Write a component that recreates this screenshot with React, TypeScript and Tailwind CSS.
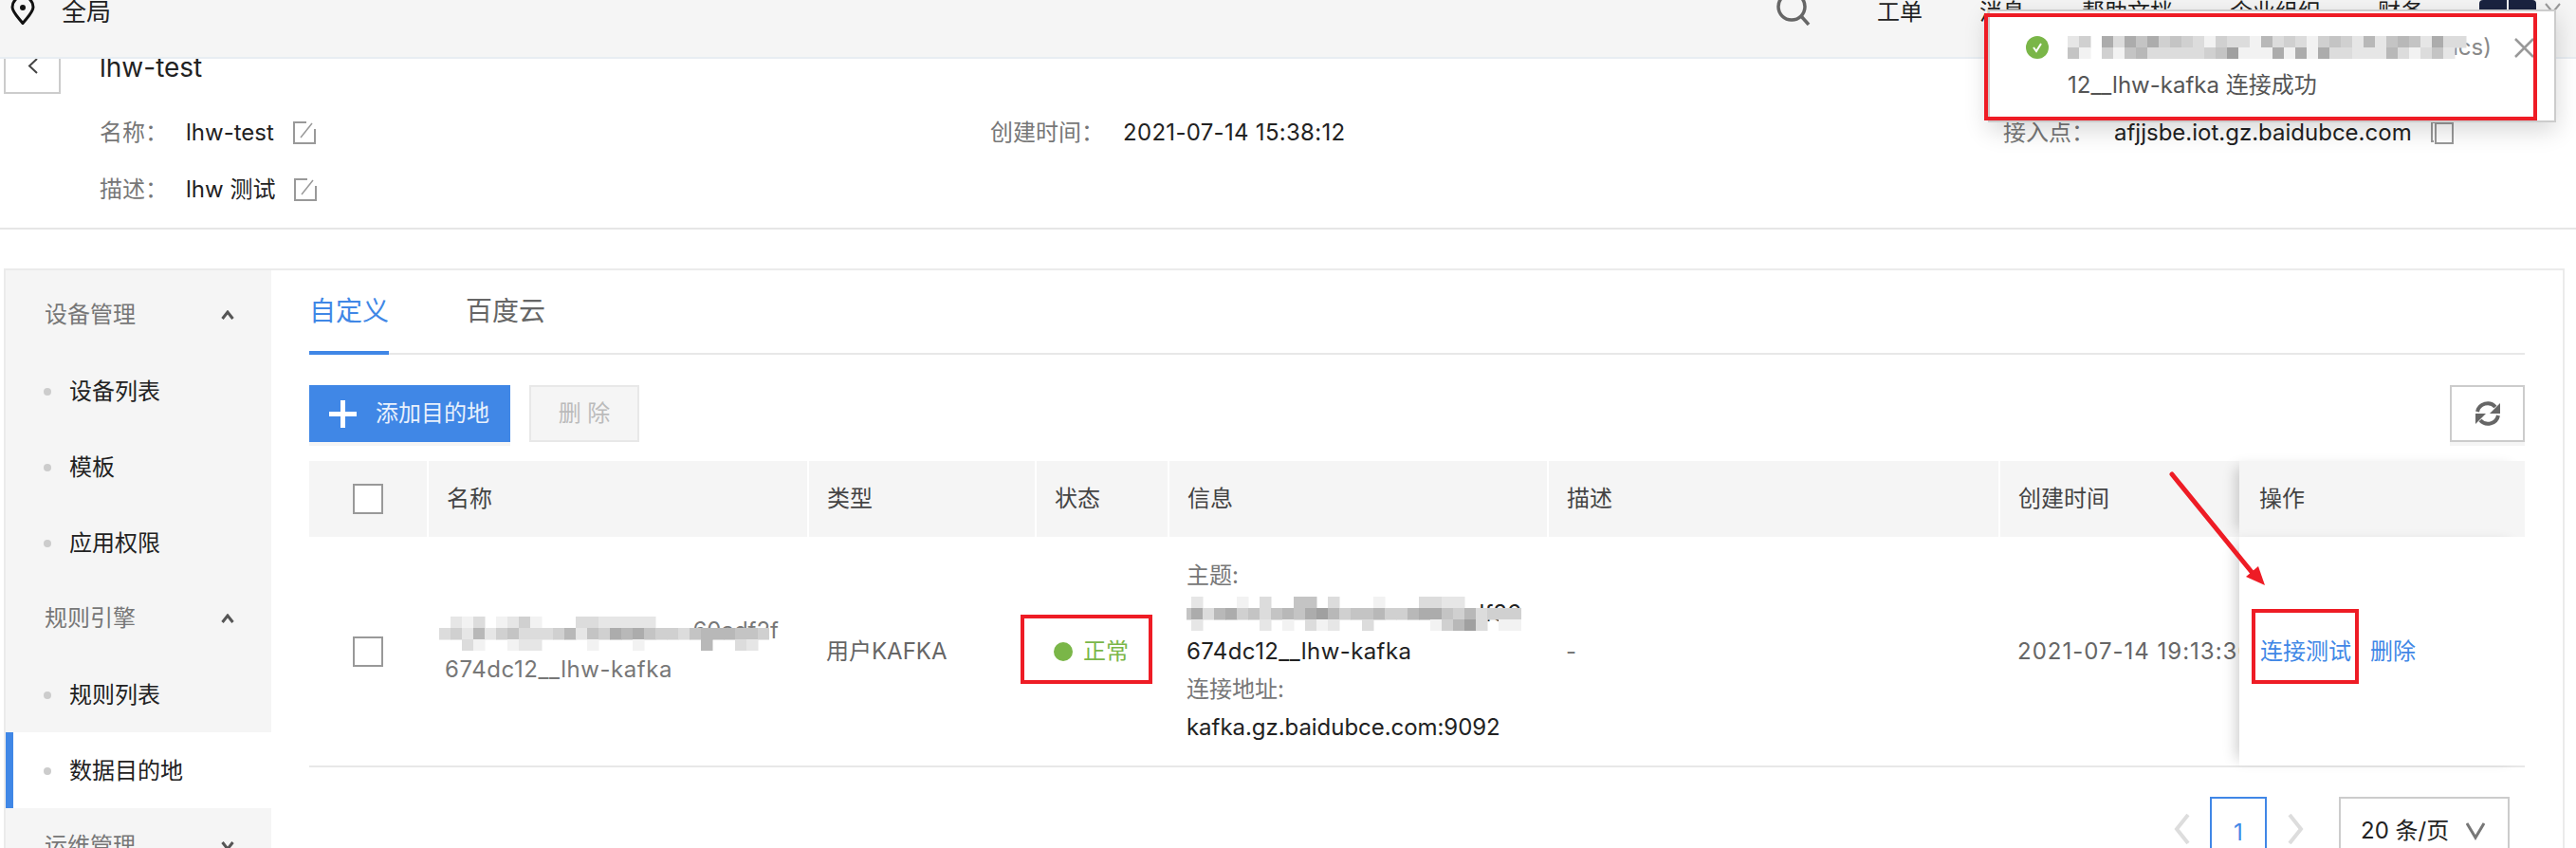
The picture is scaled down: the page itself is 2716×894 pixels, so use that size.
import React from "react";

const FONT = "font-['Inter','Noto_Sans_CJK_SC',sans-serif]";

const GREYS = ["transparent", "#f2f2f2", "#e6e6e6", "#dcdcdc", "#d0d0d0", "#c4c4c4", "#b8b8b8", "#acacac", "#a0a0a0", "#949494"];

// each row of digits is one line of the blurred-out pixels, 0 = nothing there
function Mosaic({ rows, className }: { rows: string[]; className: string }) {
  const cols = Math.max(...rows.map((r) => r.length));
  return (
    <svg className={className} width={cols * 12} height={rows.length * 12} viewBox={`0 0 ${cols * 12} ${rows.length * 12}`}>
      {rows.map((row, y) =>
        row.split("").map((c, x) =>
          c === "0" ? null : <rect key={`${x}-${y}`} x={x * 12} y={y * 12} width="12.5" height="12.5" fill={GREYS[Number(c)]} />
        )
      )}
    </svg>
  );
}

function EditIcon() {
  return (
    <svg width="24" height="24" viewBox="0 0 24 24" fill="none" stroke="#999" strokeWidth="2" className="ml-[20px] shrink-0">
      <path d="M14 1H1v22h22V8" />
      <path d="M8 17L20 2" strokeWidth="1.5" />
    </svg>
  );
}

function Check() {
  return <div className="flex h-[32px] w-[32px] border-2 border-[#999] bg-white" />;
}

function Dot() {
  return <span className="h-[8px] w-[8px] shrink-0 rounded-full bg-[#ccc]" />;
}

function Caret({ down }: { down?: boolean }) {
  return (
    <svg width="14" height="10" viewBox="0 0 14 10" fill="none" stroke="#555" strokeWidth="3" className={down ? "rotate-180" : ""}>
      <path d="M1.500 9L7 2l5.500 7" />
    </svg>
  );
}

function Group({ label, down }: { label: string; down?: boolean }) {
  return (
    <div className="flex h-[80px] items-center justify-between pl-[41px] pr-[39px] text-[24px] text-[#777]">
      <span>{label}</span>
      <Caret down={down} />
    </div>
  );
}

function Item({ label, active }: { label: string; active?: boolean }) {
  return (
    <div className={`flex h-[80px] items-center gap-[19px] pt-[2px] text-[24px] text-[#222] ${active ? "border-l-[8px] border-[#4087e6] bg-white pl-[32px]" : "pl-[40px]"}`}>
      <Dot />
      <span>{label}</span>
    </div>
  );
}

function Meta({ label, children }: { label: string; children: React.ReactNode }) {
  return (
    <div className="flex h-[60px] items-center text-[24px]">
      <span className="text-[#777]">{label}</span>
      {children}
    </div>
  );
}

const headCell = "flex h-[80px] items-center border-l-2 border-white bg-[#f5f5f5] pl-[19px] text-[24px] text-[#444]";
const bodyCell = "flex h-[241px] items-center pl-[20px] text-[24px]";
const stickyShadow = "relative shadow-[-10px_0_14px_-7px_rgba(0,0,0,0.2)]";

export default function App() {
  return (
    <div className={`relative h-[894px] w-[2716px] overflow-hidden bg-white ${FONT}`}>
      {/* top bar */}
      <div className="relative z-10 flex h-[62px] items-start border-b-2 border-[#e8edf2] bg-[#f5f5f5] pl-[11px] pr-[16px] text-[24px] text-[#222]">
        <svg width="26" height="27" viewBox="0 0 26 27" fill="none" stroke="#111" strokeWidth="3" className="-mt-[1px]">
          <path d="M13 25.500C7 18 2 13.500 2 8.500a11 11 0 0 1 22 0C24 13.500 19 18 13 25.500z" />
          <circle cx="13" cy="9" r="3" fill="#111" stroke="none" />
        </svg>
        <span className="ml-[28px] text-[26px] leading-[26px]">全局</span>
        <div className="ml-auto flex h-[26px] items-center">
          <svg width="36" height="28" viewBox="0 0 36 28" fill="none" stroke="#666" strokeWidth="3.500">
            <circle cx="16" cy="8" r="14" />
            <path d="M26 18l8 9" />
          </svg>
          <span className="ml-[70px]">工单</span>
          <span className="ml-[60px]">消息</span>
          <span className="ml-[60px]">帮助文档</span>
          <span className="ml-[60px]">企业组织</span>
          <span className="ml-[60px]">财务</span>
          <div className="ml-[59px] flex h-[26px] w-[60px] justify-center rounded-t-[4px] bg-[#1a2340]">
            <span className="h-full w-[2px] bg-[#f5f5f5]" />
          </div>
          <svg width="17" height="12" viewBox="0 0 17 12" fill="none" stroke="#999" strokeWidth="2" className="-mt-[8px] ml-[9px]">
            <path d="M1 1l7.500 9L16 1" />
          </svg>
        </div>
      </div>

      {/* instance info */}
      <div className="flex h-[180px] border-b-2 border-[#e6e6e6] pl-[4px]">
        <div className="-mt-[22px] flex h-[59px] w-[60px] items-center justify-center border-2 border-[#ccc] bg-white">
          <svg width="13" height="17" viewBox="0 0 13 17" fill="none" stroke="#444" strokeWidth="2">
            <path d="M11 1L3 8.500l8 7.500" />
          </svg>
        </div>
        <div className="ml-[41px] flex-1">
          <div className="text-[28px] leading-[18px] text-[#222]">lhw-test</div>
          <div className="mt-[30px] grid grid-cols-[939px_1068px_1fr]">
            <Meta label="名称：">
              <span className="ml-[19px] text-[#222]">lhw-test</span>
              <EditIcon />
            </Meta>
            <Meta label="创建时间：">
              <span className="ml-[20px] tracking-[0.3px] text-[#222]">2021-07-14 15:38:12</span>
            </Meta>
            <Meta label="接入点：">
              <span className="ml-[21px] text-[#222]">afjjsbe.iot.gz.baidubce.com</span>
              <svg width="24" height="24" viewBox="0 0 24 24" fill="none" stroke="#999" strokeWidth="2" className="ml-[20px]">
                <path d="M5 1H1v20h2" />
                <rect x="5" y="2" width="18" height="21" />
              </svg>
            </Meta>
            <Meta label="描述：">
              <span className="ml-[19px] text-[#222]">lhw 测试</span>
              <EditIcon />
            </Meta>
          </div>
        </div>
      </div>

      {/* main panel */}
      <div className="ml-[4px] mt-[41px] flex w-[2700px] border-2 border-[#ebebeb]">
        <div className="h-[620px] w-[280px] shrink-0 bg-[#f5f5f5] pt-[7px]">
          <Group label="设备管理" />
          <Item label="设备列表" />
          <Item label="模板" />
          <Item label="应用权限" />
          <Group label="规则引擎" />
          <Item label="规则列表" />
          <Item label="数据目的地" active />
          <Group label="运维管理" down />
        </div>

        <div className="min-w-0 flex-1 px-[40px]">
          <div className="flex h-[89px] gap-[81px] border-b-2 border-[#e8e8e8] text-[28px] leading-[34px]">
            <div className="h-[89px] border-b-4 border-[#4087e6] pt-[26px] text-[#4087e6]">自定义</div>
            <div className="pt-[26px] text-[#666]">百度云</div>
          </div>

          <div className="mt-[32px] flex h-[60px] items-stretch text-[24px]">
            <button className="flex w-[212px] items-center bg-[#4087e6] pl-[21px] text-[#e8f0fc] shadow-[0_4px_0_#f5f5f5]">
              <svg width="29" height="29" viewBox="0 0 29 29" fill="#fff">
                <path d="M12 0h5v12h12v5H17v12h-5V17H0v-5h12z" />
              </svg>
              <span className="ml-[20px]">添加目的地</span>
            </button>
            <button className="ml-[20px] w-[116px] border-2 border-[#e8e8e8] bg-[#f5f5f5] text-[#bbb]">删 除</button>
            <button className="ml-auto flex w-[79px] items-center justify-center border-2 border-[#ccc] shadow-[0_4px_0_#f5f5f5]">
              <svg width="30" height="28" viewBox="0 0 30 28" fill="none" stroke="#666" strokeWidth="4">
                <path d="M4 12A11 11 0 0 1 23 7" />
                <path d="M26 16A11 11 0 0 1 7 21" />
                <path d="M28 3v11H17z" fill="#666" stroke="none" />
                <path d="M2 25V14h11z" fill="#666" stroke="none" />
              </svg>
            </button>
          </div>

          {/* table */}
          <div className="mt-[20px] grid grid-cols-[124px_401px_240px_140px_400px_476px_254px_301px] border-b-2 border-[#e8e8e8]">
            <div className="flex h-[80px] items-center justify-center bg-[#f5f5f5]"><Check /></div>
            <div className={headCell}>名称</div>
            <div className={headCell}>类型</div>
            <div className={headCell}>状态</div>
            <div className={headCell}>信息</div>
            <div className={headCell}>描述</div>
            <div className={headCell}>创建时间</div>
            <div className={`${headCell} ${stickyShadow} border-none pl-[21px]`}>操作</div>

            <div className="flex h-[241px] items-center justify-center"><Check /></div>
            <div className="h-[241px] pl-[19px] pt-[84px] text-[24px] text-[#777]">
              <div className="relative h-[30px] w-[352px] overflow-visible text-right leading-[30px]">
                60adf2f
                <Mosaic
                  className="absolute -left-[6px] top-0"
                  rows={[
                    "02130124100033222220000000000",
                    "34262453334625476754435666554",
                    "00310012200001000100000600320",
                  ]}
                />
              </div>
              <div className="mt-[9px] leading-[34px] tracking-[0.55px]">674dc12__lhw-kafka</div>
            </div>
            <div className={`${bodyCell} text-[#666]`}>用户KAFKA</div>
            <div className={`${bodyCell} gap-[11px] text-[#7ab648]`}>
              <span className="h-[20px] w-[20px] rounded-full bg-[#7ab648]" />
              正常
            </div>
            <div className="flex h-[241px] flex-col justify-center whitespace-nowrap pl-[20px] text-[24px] leading-[40px] text-[#222]">
              <span className="text-[#777]">主题:</span>
              <div className="relative h-[40px] overflow-hidden text-right">
                <span className="mr-[27px] text-[#222]">lf86</span>
                <Mosaic
                  className="absolute -left-[7px] top-[2px]"
                  rows={[
                    "020001030055030001000332200000",
                    "573674535657864556446775463444",
                    "020000020103120030000014683011",
                  ]}
                />
              </div>
              <span className="tracking-[0.4px]">674dc12__lhw-kafka</span>
              <span className="text-[#777]">连接地址:</span>
              <span className="-tracking-[0.05px]">kafka.gz.baidubce.com:9092</span>
            </div>
            <div className={`${bodyCell} text-[#777]`}>-</div>
            <div className={`${bodyCell} overflow-hidden whitespace-nowrap tracking-[1px] text-[#666]`}>2021-07-14 19:13:30</div>
            <div className={`${bodyCell} ${stickyShadow} gap-[20px] bg-white pl-[22px] text-[#4087e6]`}>
              <span>连接测试</span>
              <span>删除</span>
            </div>
          </div>

          {/* pagination */}
          <div className="mt-[31px] flex items-start justify-end pr-[16px] text-[24px]">
            <svg width="17" height="32" viewBox="0 0 17 32" fill="none" stroke="#ddd" strokeWidth="4" className="mt-[18px]">
              <path d="M15 1L3 16l12 15" />
            </svg>
            <div className="ml-[21px] flex h-[80px] w-[60px] justify-center border-2 border-[#4087e6] pt-[18px] text-[#4087e6]">1</div>
            <svg width="17" height="32" viewBox="0 0 17 32" fill="none" stroke="#ddd" strokeWidth="4" className="ml-[22px] mt-[18px]">
              <path d="M2 1l12 15L2 31" />
            </svg>
            <div className="ml-[37px] flex h-[80px] w-[180px] items-start border-2 border-[#ccc] pl-[21px] pt-[16px] text-[24px] text-[#222]">
              <span>20 条/页</span>
              <svg width="20" height="20" viewBox="0 0 20 20" fill="none" stroke="#777" strokeWidth="3" className="ml-auto mr-[24px] mt-[8px]">
                <path d="M1 2l9 15 9-15" />
              </svg>
            </div>
          </div>
        </div>
      </div>

      {/* toast */}
      <div className="absolute left-[2096px] top-[10px] z-20 h-[119px] w-[599px] border-2 border-[#ccc] bg-white pl-[38px] pr-[21px] pt-[18px] text-[24px] text-[#555] shadow-[0_8px_24px_rgba(0,0,0,0.16)]">
        <div className="flex h-[40px] items-center">
          <svg width="24" height="24" viewBox="0 0 24 24" className="shrink-0">
            <circle cx="12" cy="12" r="12" fill="#7ab648" />
            <path d="M8 12l3 4 5-8" fill="none" stroke="#fff" strokeWidth="2" />
          </svg>
          <div className="relative ml-[20px] w-[447px] text-right text-[#888]">
            74dcs)
            <Mosaic
              className="absolute left-0 top-[6px]"
              rows={["2407375745431433163431454262565273300", "5104156333334581117171733222631352000"]}
            />
          </div>
          <svg width="21" height="21" viewBox="0 0 21 21" fill="none" stroke="#999" strokeWidth="2.500" className="ml-auto">
            <path d="M1 1l19 19M20 1L1 20" />
          </svg>
        </div>
        <div className="ml-[44px] leading-[40px]">12__lhw-kafka 连接成功</div>
      </div>

      {/* red annotations */}
      <div className="absolute left-[2092px] top-[14px] z-30 h-[113px] w-[583px] border-4 border-[#ee1c25]" />
      <div className="absolute left-[1076px] top-[648px] z-30 h-[73px] w-[139px] border-4 border-[#ee1c25]" />
      <div className="absolute left-[2374px] top-[642px] z-30 h-[79px] w-[113px] border-4 border-[#ee1c25]" />
      <svg className="absolute left-[2280px] top-[495px] z-30" width="115" height="130" viewBox="0 0 115 130" fill="#ee1c25">
        <path d="M10 5L94 108" stroke="#ee1c25" strokeWidth="5" strokeLinecap="round" />
        <path d="M108 122L101 102 88 113z" />
      </svg>
    </div>
  );
}
